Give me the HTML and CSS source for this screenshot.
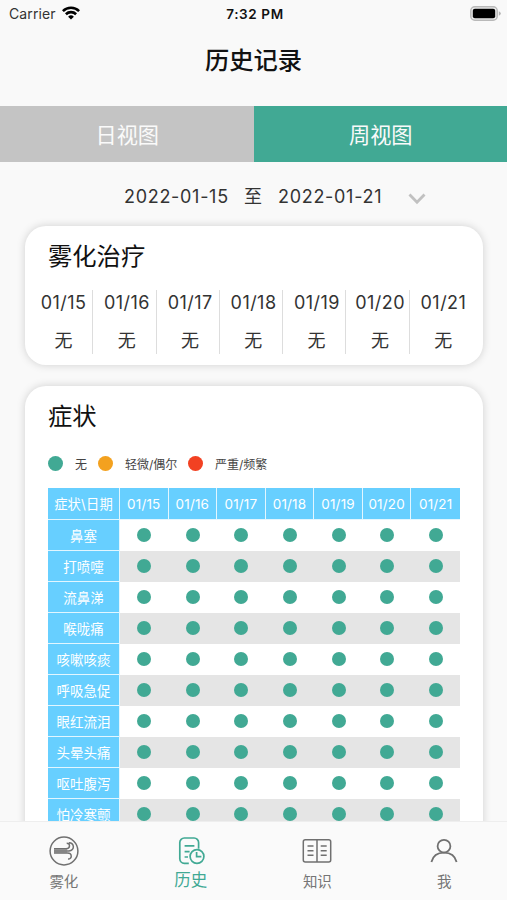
FILE: index.html
```html
<!DOCTYPE html>
<html lang="zh-CN">
<head>
<meta charset="utf-8">
<title>历史记录</title>
<link rel="stylesheet" href="styles.css">
</head>
<body>
<div class="app">
  <header class="status">
    <div class="carrier"><span>Carrier</span>
      <svg width="18" height="14" viewBox="0 0 18 14" fill="none" stroke="#000" stroke-width="2.6"><path d="M.9 5.1a11.5 11.5 0 0 1 16.2 0M3.9 8.2a7.3 7.3 0 0 1 10.2 0"/><path d="M9 13.6 6.1 10.7a4.1 4.1 0 0 1 5.8 0z" fill="#000" stroke="none"/></svg>
    </div>
    <div class="clock">7:32 PM</div>
    <svg class="battery" width="31" height="16" viewBox="0 0 31 16"><rect x=".8" y=".8" width="26.4" height="13.4" rx="4" fill="#eee" stroke="#b9b9b9" stroke-width="1.5"/><rect x="2.8" y="2.8" width="22.4" height="9.4" rx="2"/><path d="M28.8 5.2q2 .8 2 2.3t-2 2.3z" fill="#b5b5b5"/></svg>
  </header>
  <h1 class="title">历史记录</h1>
  <div class="tabs"><div class="tab">日视图</div><div class="tab tab-on">周视图</div></div>
  <div class="range">
    <span class="date">2022-01-15</span><span class="to">至</span><span class="date">2022-01-21</span>
    <svg width="18" height="12" viewBox="0 0 18 12" fill="none" stroke="#c1c1c1" stroke-width="2.8"><path d="m1.500 1.500 7.500 7.700 7.500-7.700"/></svg>
  </div>
  <main class="content">
    <section class="card care">
      <h2>雾化治疗</h2>
      <div class="week" id="week"></div>
    </section>
    <section class="card symptoms">
      <h2>症状</h2>
      <div class="legend">
        <i class="key green"></i><span class="none">无</span>
        <i class="key orange"></i><span class="mild">轻微/偶尔</span>
        <i class="key red"></i><span class="severe">严重/频繁</span>
      </div>
      <div class="table" id="table"></div>
    </section>
  </main>
  <nav class="nav">
    <div class="item">
      <svg width="30" height="30" viewBox="0 0 30 30" fill="none" stroke="#707070" stroke-width="1.5"><circle cx="15" cy="15" r="13.9"/><path d="M5 12.700h12.200c4.300 0 4.300-5.500.5-5.500M5 14.900h15c6 0 5.700-8.500-.2-8.100M5 17.100h13.500c5.100 0 4.700 6.300.5 6"/><path d="M5 13.800h13M5 16h13" stroke-width="1.2" opacity=".7"/></svg>
      <span>雾化</span>
    </div>
    <div class="item item-on">
      <svg width="30" height="30" viewBox="0 0 30 30" fill="none" stroke="#41a994" stroke-width="1.7"><path d="M12.800 27.300H8.300a4.500 4.500 0 0 1-4.500-4.500V6.500A4.500 4.500 0 0 1 8.300 2h9.800a4.500 4.500 0 0 1 4.500 4.500v6.300M8.600 9.900h9.800M8.600 15.600h5M8.600 21h3.400"/><circle cx="21" cy="20.5" r="6.9"/><path d="M20.600 16v4.600h4.800"/></svg>
      <span>历史</span>
    </div>
    <div class="item">
      <svg width="30" height="30" viewBox="0 0 30 30" fill="none" stroke="#707070" stroke-width="1.5"><rect x="1.3" y="3.7" width="27.4" height="22.3" rx="2"/><path d="M15 4v22M5.500 10h6M5.500 14.700h6M5.500 19.300h6M18.700 10h6M18.700 14.700h6M18.700 19.300h6"/></svg>
      <span>知识</span>
    </div>
    <div class="item">
      <svg width="30" height="30" viewBox="0 0 30 30" fill="none" stroke="#707070" stroke-width="1.8"><circle cx="15" cy="10.2" r="6.4"/><path d="M2.400 26c1.400-5.800 6-9.400 12.600-9.400s11.200 3.600 12.600 9.400"/></svg>
      <span>我</span>
    </div>
  </nav>
</div>
<script src="script.js"></script>
</body>
</html>
```
FILE: styles.css
```css
* { box-sizing: border-box; }
body {
  margin: 0;
  background: #f9f9f9;
  color: #333;
  font-family: Inter, "Noto Sans CJK SC", sans-serif;
}
.app { width: 507px; height: 900px; display: flex; flex-direction: column; overflow: hidden; }
h1, h2 { margin: 0; color: #111; }
svg { display: block; flex: none; }
.status {
  height: 28px;
  flex: none;
  display: grid;
  grid-template-columns: 1fr auto 1fr;
  align-items: center;
  padding: 0 6px 0 9px;
  font-size: 14px;
  line-height: 28px;
}
.carrier { display: flex; align-items: center; gap: 6px; letter-spacing: .1px; }
.carrier svg { margin-top: -3px; }
.clock { font-weight: 600; font-size: 13.5px; letter-spacing: .6px; color: #111; }
.battery { justify-self: end; margin-top: -1px; }
.title {
  height: 78px;
  flex: none;
  line-height: 64px;
  text-align: center;
  font-size: 24.3px;
  font-weight: 500;
}
.tabs { display: flex; height: 56px; flex: none; }
.tab {
  flex: 1;
  background: #c4c4c4;
  color: #fafafa;
  text-align: center;
  font-size: 21.2px;
  line-height: 58px;
  padding-left: 1px;
}
.tab-on { background: #41a994; }
.range {
  display: flex;
  align-items: center;
  height: 52px;
  flex: none;
  padding: 18px 0 0 124px;
  font-size: 18px;
  line-height: 26px;
}
.date { width: 105px; letter-spacing: .7px; white-space: nowrap; }
.to { margin: 0 16px 0 15px; }
.range svg { margin: 3px 0 0 25px; }
.content { flex: 1; min-height: 0; overflow: hidden; padding: 12px 24px 0 25px; }
.card { background: #fff; border-radius: 21px; box-shadow: 0 0 8px rgba(0, 0, 0, .17); }
.care { height: 139px; margin-bottom: 21px; }
.card h2 {
  height: 64px;
  padding-left: 23px;
  font-size: 24.3px;
  font-weight: 400;
  line-height: 60px;
}
.week { display: grid; grid-template-columns: repeat(7, 63.3px); margin-left: 5px; }
.day {
  height: 64px;
  display: flex;
  flex-direction: column;
  align-items: center;
  padding-left: 5px;
  border-right: 1px solid #ddd;
  font-size: 18px;
  letter-spacing: .45px;
  line-height: 25px;
}
.day:last-child { border-color: transparent; }
.day span + span { margin-top: 13px; }
.symptoms { height: 520px; }
.legend { display: flex; align-items: center; height: 26px; padding-left: 23px; font-size: 12px; color: #444; }
.key { width: 15px; height: 15px; border-radius: 50%; flex: none; }
.legend span { white-space: nowrap; margin-left: 12px; }
.legend .none { width: 23px; }
.legend .mild { width: 63px; }
.green { background: #41a994; }
.orange { background: #f3a11f; }
.red { background: #f24122; }
.table { width: 412px; margin: 12px 0 0 23px; }
.row {
  display: grid;
  grid-template-columns: 72px repeat(7, 1fr);
  height: 31px;
  background: #fff;
}
.row:nth-child(odd) { background: #e5e5e5; }
.row.head { height: 32px; background: #67cfff; }
.cell { display: flex; align-items: center; justify-content: center; padding-bottom: 1px; }
.name {
  background: #67cfff;
  color: #fff;
  border-right: 1px solid #e2f6ff;
  border-bottom: 1px solid #e2f6ff;
  padding-bottom: 0;
  font-size: 13.5px;
  font-weight: 400;
  white-space: nowrap;
}
.head .name { letter-spacing: .15px; }
.head .name:first-child { font-size: 13.3px; }
.head .name:last-child { border-right: 0; }
.dot { width: 14px; height: 14px; border-radius: 50%; background: #41a994; }
.nav {
  height: 79px;
  flex: none;
  display: flex;
  background: #fafafa;
  border-top: 1px solid #eee;
}
.item {
  flex: 1;
  display: flex;
  flex-direction: column;
  align-items: center;
  padding: 14px 0 0 1px;
  color: #757575;
  font-size: 14.5px;
  line-height: 31px;
}
.item-on { color: #41a994; font-size: 16.5px; line-height: 29px; }
```
FILE: script.js
```js
const days = ['01/15', '01/16', '01/17', '01/18', '01/19', '01/20', '01/21'];
const symptoms = ['鼻塞', '打喷嚏', '流鼻涕', '喉咙痛', '咳嗽咳痰', '呼吸急促', '眼红流泪', '头晕头痛', '呕吐腹泻', '怕冷寒颤'];

document.getElementById('week').innerHTML = days
  .map(d => `<div class="day"><span>${d}</span><span>无</span></div>`)
  .join('');

const head = ['症状\\日期', ...days].map(t => `<div class="cell name">${t}</div>`).join('');
const dots = days.map(() => '<div class="cell"><i class="dot"></i></div>').join('');
document.getElementById('table').innerHTML =
  `<div class="row head">${head}</div>` +
  symptoms.map(s => `<div class="row"><div class="cell name">${s}</div>${dots}</div>`).join('');
```
